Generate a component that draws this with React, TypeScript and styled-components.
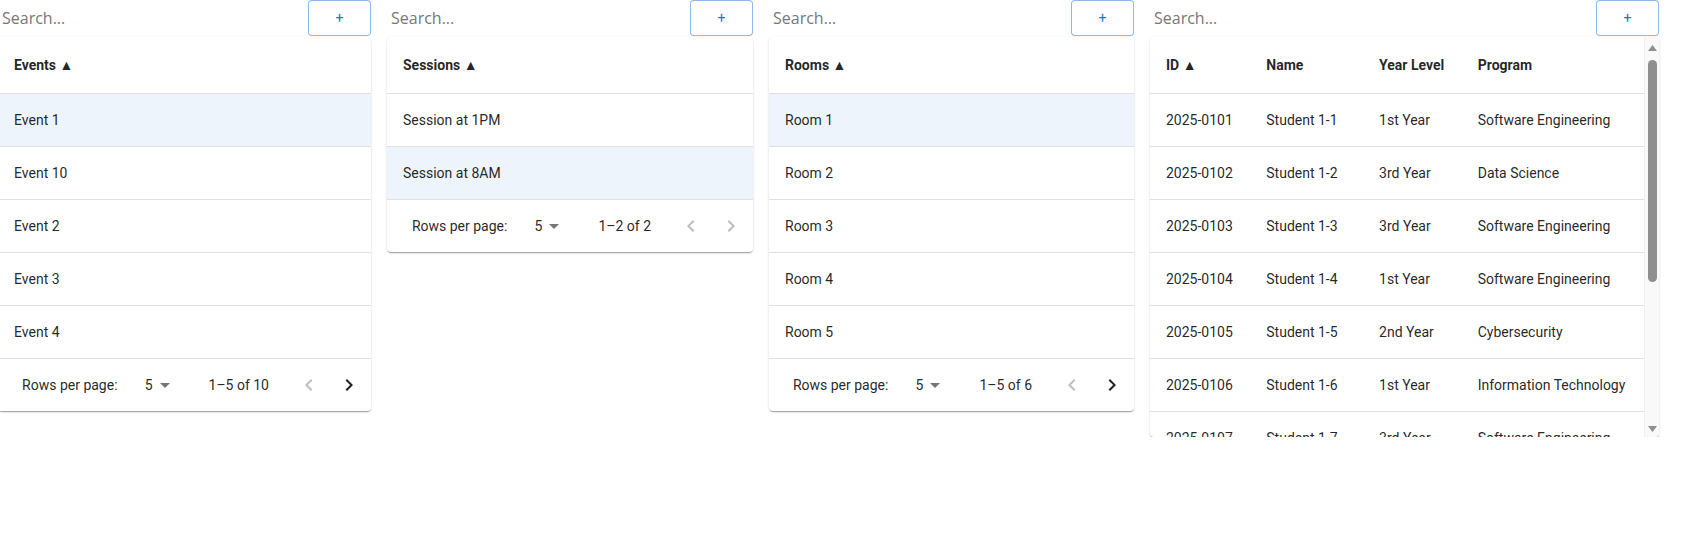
import React from 'react';
import styled, { createGlobalStyle, css } from 'styled-components';

const GlobalStyle = createGlobalStyle`
  body {
    margin: 0;
    background: #ffffff;
    font-family: Roboto, 'Liberation Sans', sans-serif;
    color: rgba(0, 0, 0, 0.87);
  }
`;

type Column = { key: string; label: string };
type Row = Record<string, string>;

type PanelProps = {
  width: number;
  columns: Column[];
  rows: Row[];
  selected?: number;
  range: string;
  hasNext: boolean;
  scroll?: boolean;
};

const ArrowLeft = () => (
  <svg viewBox="0 0 24 24" width="24" height="24" fill="currentColor">
    <path d="M15.41 16.59 10.83 12l4.58-4.59L14 6l-6 6 6 6z" />
  </svg>
);

const ArrowRight = () => (
  <svg viewBox="0 0 24 24" width="24" height="24" fill="currentColor">
    <path d="M8.59 16.59 13.17 12 8.59 7.41 10 6l6 6-6 6z" />
  </svg>
);

const DropIcon = () => (
  <svg viewBox="0 0 24 24" width="24" height="24" fill="currentColor">
    <path d="M7 10l5 5 5-5z" />
  </svg>
);

// the screenshot shows a classic scrollbar; headless hides the native one, so draw it
const FakeScrollbar = () => (
  <ScrollTrack>
    <ScrollArrow $up>
      <svg viewBox="0 0 15 8" width="15" height="8" fill="#8f8f8f">
        <polygon points="3,7 7.5,1 12,7" />
      </svg>
    </ScrollArrow>
    <ScrollThumb />
    <ScrollArrow>
      <svg viewBox="0 0 15 8" width="15" height="8" fill="#8f8f8f">
        <polygon points="3,1 12,1 7.5,7" />
      </svg>
    </ScrollArrow>
  </ScrollTrack>
);

const Panel = ({ width, columns, rows, selected, range, hasNext, scroll }: PanelProps) => {
  const body = (
    <>
      <Table>
        <thead>
          <tr>
            {columns.map((c, i) => (
              <HeadCell key={c.key}>
                {c.label}
                {i === 0 ? ' ▲' : ''}
              </HeadCell>
            ))}
          </tr>
        </thead>
        <tbody>
          {rows.map((r, i) => (
            <BodyRow key={i} $selected={i === selected}>
              {columns.map((c) => (
                <BodyCell key={c.key}>{r[c.key]}</BodyCell>
              ))}
            </BodyRow>
          ))}
        </tbody>
      </Table>
      <Pagination>
        <PageLabel>Rows per page:</PageLabel>
        <PageSelect>
          <SelectValue>5</SelectValue>
          <SelectIcon>
            <DropIcon />
          </SelectIcon>
        </PageSelect>
        <PageLabel>{range}</PageLabel>
        <PageActions>
          <PageButton $disabled>
            <ArrowLeft />
          </PageButton>
          <PageButton $disabled={!hasNext}>
            <ArrowRight />
          </PageButton>
        </PageActions>
      </Pagination>
    </>
  );

  return (
    <Column $width={width}>
      <Toolbar>
        <SearchInput placeholder="Search..." />
        <AddButton>+</AddButton>
      </Toolbar>
      <Card $scroll={scroll}>
        {scroll ? (
          <>
            <ScrollArea>{body}</ScrollArea>
            <FakeScrollbar />
          </>
        ) : (
          body
        )}
      </Card>
    </Column>
  );
};

const events = ['Event 1', 'Event 10', 'Event 2', 'Event 3', 'Event 4'].map((name) => ({ name }));
const sessions = ['Session at 1PM', 'Session at 8AM'].map((name) => ({ name }));
const rooms = ['Room 1', 'Room 2', 'Room 3', 'Room 4', 'Room 5'].map((name) => ({ name }));

const students: Row[] = [
  ['1st Year', 'Software Engineering'],
  ['3rd Year', 'Data Science'],
  ['3rd Year', 'Software Engineering'],
  ['1st Year', 'Software Engineering'],
  ['2nd Year', 'Cybersecurity'],
  ['1st Year', 'Information Technology'],
  ['3rd Year', 'Software Engineering'],
  ['4th Year', 'Computer Science'],
  ['2nd Year', 'Data Science'],
  ['4th Year', 'Cybersecurity'],
].map(([year, program], i) => ({
  id: `2025-01${String(i + 1).padStart(2, '0')}`,
  name: `Student 1-${i + 1}`,
  year,
  program,
}));

const App = () => (
  <>
    <GlobalStyle />
    <Page>
      <Panel
        width={373}
        columns={[{ key: 'name', label: 'Events' }]}
        rows={events}
        selected={0}
        range="1–5 of 10"
        hasNext
      />
      <Panel
        width={366}
        columns={[{ key: 'name', label: 'Sessions' }]}
        rows={sessions}
        selected={1}
        range="1–2 of 2"
        hasNext={false}
      />
      <Panel
        width={365}
        columns={[{ key: 'name', label: 'Rooms' }]}
        rows={rooms}
        selected={0}
        range="1–5 of 6"
        hasNext
      />
      <Panel
        width={509}
        columns={[
          { key: 'id', label: 'ID' },
          { key: 'name', label: 'Name' },
          { key: 'year', label: 'Year Level' },
          { key: 'program', label: 'Program' },
        ]}
        rows={students}
        range="1–10 of 40"
        hasNext
        scroll
      />
    </Page>
  </>
);

export default App;

const Page = styled.div`
  display: flex;
  align-items: flex-start;
  gap: 16px;
  margin-left: -2px;
`;

const Column = styled.div<{ $width: number }>`
  width: ${(p) => p.$width}px;
  flex: none;
  display: flex;
  flex-direction: column;
`;

const Toolbar = styled.div`
  display: flex;
  align-items: center;
  justify-content: space-between;
  height: 36px;
  margin-bottom: 1px;
`;

const SearchInput = styled.input`
  border: none;
  outline: none;
  background: transparent;
  padding: 0 0 0 4px;
  font-family: 'Open Sans', sans-serif;
  font-size: 16px;
  color: #333;
  &::placeholder {
    color: #777777;
  }
`;

const AddButton = styled.button`
  width: 63px;
  height: 36px;
  flex: none;
  border: 1px solid rgba(25, 118, 210, 0.5);
  border-radius: 4px;
  background: #ffffff;
  color: #1976d2;
  font-family: Roboto, sans-serif;
  font-size: 14px;
  font-weight: 400;
  cursor: pointer;
`;

const Card = styled.div<{ $scroll?: boolean }>`
  background: #ffffff;
  border-radius: 4px;
  box-shadow: 0px 2px 1px -1px rgba(0, 0, 0, 0.2), 0px 1px 1px 0px rgba(0, 0, 0, 0.14),
    0px 1px 3px 0px rgba(0, 0, 0, 0.12);
  overflow: hidden;
  ${(p) =>
    p.$scroll &&
    css`
      display: flex;
      height: 400px;
    `}
`;

const ScrollArea = styled.div`
  flex: 1;
  min-width: 0;
  overflow-y: auto;
  scrollbar-width: none;
`;

const ScrollTrack = styled.div`
  width: 15px;
  flex: none;
  display: flex;
  flex-direction: column;
  align-items: center;
  background: #f9f9f9;
  border-left: 1px solid #f0f0f0;
  box-sizing: border-box;
`;

const ScrollArrow = styled.div<{ $up?: boolean }>`
  height: 23px;
  display: flex;
  justify-content: center;
  align-items: ${(p) => (p.$up ? 'flex-start' : 'flex-end')};
  padding: ${(p) => (p.$up ? '7px 0 0' : '0 0 4px')};
  box-sizing: border-box;
  margin-top: ${(p) => (p.$up ? '0' : 'auto')};
`;

const ScrollThumb = styled.div`
  width: 9px;
  height: 222px;
  border-radius: 5px;
  background: #8f8f8f;
`;

const Table = styled.table`
  width: 100%;
  border-collapse: collapse;
  font-size: 14px;
`;

const HeadCell = styled.th`
  text-align: left;
  padding: 16px;
  font-weight: 700;
  line-height: 24px;
  white-space: nowrap;
  border-bottom: 1px solid #e0e0e0;
`;

const BodyRow = styled.tr<{ $selected?: boolean }>`
  background: ${(p) => (p.$selected ? 'rgba(25, 118, 210, 0.08)' : 'transparent')};
`;

const BodyCell = styled.td`
  padding: 16px;
  line-height: 20px;
  white-space: nowrap;
  border-bottom: 1px solid #e0e0e0;
`;

const Pagination = styled.div`
  display: flex;
  align-items: center;
  justify-content: flex-end;
  min-height: 52px;
  padding-right: 2px;
  font-size: 14px;
  white-space: nowrap;
`;

const PageLabel = styled.p`
  margin: 0;
  line-height: 20px;
`;

const PageSelect = styled.div`
  position: relative;
  display: inline-flex;
  align-items: center;
  margin: 0 32px 0 11px;
  padding: 0 24px 0 8px;
`;

const SelectValue = styled.span`
  min-width: 16px;
  text-align: right;
  line-height: 23px;
`;

const SelectIcon = styled.span`
  position: absolute;
  right: 0;
  top: 50%;
  height: 24px;
  margin-top: -12px;
  color: rgba(0, 0, 0, 0.54);
`;

const PageActions = styled.div`
  display: flex;
  margin-left: 20px;
`;

const PageButton = styled.button<{ $disabled?: boolean }>`
  width: 40px;
  height: 40px;
  padding: 8px;
  border: none;
  border-radius: 50%;
  background: transparent;
  display: flex;
  align-items: center;
  justify-content: center;
  color: ${(p) => (p.$disabled ? 'rgba(0, 0, 0, 0.26)' : 'rgba(0, 0, 0, 0.87)')};
`;
